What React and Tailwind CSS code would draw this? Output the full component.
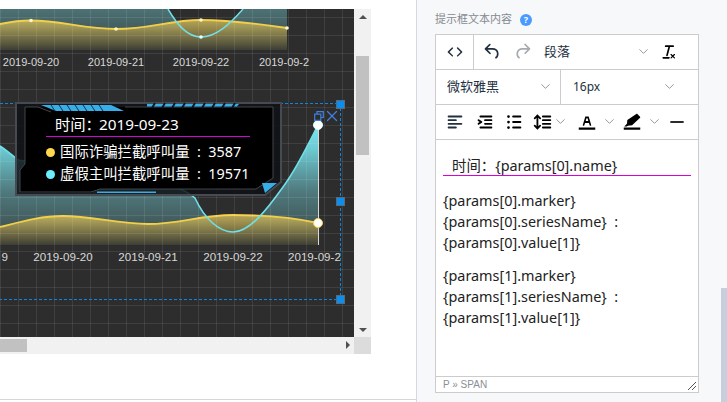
import { ChevronDown, X } from 'lucide-react';

const YAHEI = 'font-["Noto_Sans","Noto_Sans_CJK_SC",sans-serif]';

const GRID_X = Array.from({ length: 20 }, (_, i) => i * 18);
const GRID_Y = Array.from({ length: 19 }, (_, i) => 17.5 + i * 18);

const TOP_DATES = [
  { x: 31, label: '2019-09-20' },
  { x: 116, label: '2019-09-21' },
  { x: 201, label: '2019-09-22' },
  { x: 259, label: '2019-09-2', start: true },
];

const BOTTOM_DATES = [
  { x: 8, label: '9', end: true },
  { x: 63, label: '2019-09-20' },
  { x: 148, label: '2019-09-21' },
  { x: 233, label: '2019-09-22' },
  { x: 288, label: '2019-09-23', start: true },
];

const HANDLES = ['top-[91px]', 'top-[188px]', 'top-[286px]'];

const ICONS = {
  code: 'M9.8 15.7c.3.3.3.8 0 1-.3.4-.9.4-1.2 0l-4.4-4.1a.8.8 0 0 1 0-1.2l4.4-4.2c.3-.3.9-.3 1.2 0 .3.3.3.8 0 1.1L6 12l3.8 3.7zM14.2 15.7c-.3.3-.3.8 0 1 .4.4.9.4 1.2 0l4.4-4.1c.3-.3.3-.9 0-1.2l-4.4-4.2a.8.8 0 0 0-1.2 0c-.3.3-.3.8 0 1.1L18 12l-3.8 3.7z',
  undo: 'M6.4 8H12c3.7 0 6.2 2 6.8 5.1.6 2.7-.4 5.6-2.3 6.8a1 1 0 0 1-1-1.8c1.1-.6 1.8-2.7 1.4-4.6-.5-2.1-2.1-3.5-4.9-3.5H6.4l3.3 3.3a1 1 0 1 1-1.4 1.4l-5-5a1 1 0 0 1 0-1.4l5-5a1 1 0 0 1 1.4 1.4L6.4 8z',
  redo: 'M17.6 10H12c-2.8 0-4.4 1.4-4.9 3.5-.4 2 .3 4 1.4 4.6a1 1 0 1 1-1 1.8c-2-1.2-2.9-4.1-2.3-6.8.6-3 3-5.1 6.8-5.1h5.6l-3.3-3.3a1 1 0 1 1 1.4-1.4l5 5a1 1 0 0 1 0 1.4l-5 5a1 1 0 0 1-1.4-1.4l3.3-3.3z',
  clear: 'M13.2 6a1 1 0 0 1 0 .2l-2.6 10a1 1 0 0 1-1 .8h-.2a.8.8 0 0 1-.8-1l2.6-10H8a1 1 0 1 1 0-2h9a1 1 0 0 1 0 2h-3.8zM5 18h7a1 1 0 0 1 0 2H5a1 1 0 0 1 0-2zm13 1.5L16.5 18 15 19.5a.7.7 0 0 1-1-1l1.5-1.5-1.5-1.5a.7.7 0 0 1 1-1l1.5 1.5 1.5-1.5a.7.7 0 0 1 1 1L17.5 17l1.5 1.5a.7.7 0 0 1-1 1z',
  align: 'M5 5h14c.6 0 1 .4 1 1s-.4 1-1 1H5a1 1 0 1 1 0-2zm0 4h8c.6 0 1 .4 1 1s-.4 1-1 1H5a1 1 0 1 1 0-2zm0 8h8c.6 0 1 .4 1 1s-.4 1-1 1H5a1 1 0 0 1 0-2zm0-4h14c.6 0 1 .4 1 1s-.4 1-1 1H5a1 1 0 0 1 0-2z',
  indent: 'M7 5h12c.6 0 1 .4 1 1s-.4 1-1 1H7a1 1 0 1 1 0-2zm5 4h7c.6 0 1 .4 1 1s-.4 1-1 1h-7a1 1 0 0 1 0-2zm0 4h7c.6 0 1 .4 1 1s-.4 1-1 1h-7a1 1 0 0 1 0-2zm-5 4h12a1 1 0 0 1 0 2H7a1 1 0 0 1 0-2zm-2.6-3.8L6.2 12l-1.8-1.2a1 1 0 0 1 1.2-1.6l3 2a1 1 0 0 1 0 1.6l-3 2a1 1 0 1 1-1.2-1.6z',
  bullets: 'M11 5h8c.6 0 1 .4 1 1s-.4 1-1 1h-8a1 1 0 0 1 0-2zm0 6h8c.6 0 1 .4 1 1s-.4 1-1 1h-8a1 1 0 0 1 0-2zm0 6h8c.6 0 1 .4 1 1s-.4 1-1 1h-8a1 1 0 0 1 0-2zM6 4.5a1.5 1.5 0 1 1 0 3 1.5 1.5 0 0 1 0-3zm0 6a1.5 1.5 0 1 1 0 3 1.5 1.5 0 0 1 0-3zm0 6a1.5 1.5 0 1 1 0 3 1.5 1.5 0 0 1 0-3z',
  lineHeight: 'M21 5a1 1 0 0 1 .1 2H13a1 1 0 0 1-.1-2H21zm0 4a1 1 0 0 1 .1 2H13a1 1 0 0 1-.1-2H21zm0 4a1 1 0 0 1 .1 2H13a1 1 0 0 1-.1-2H21zm0 4a1 1 0 0 1 .1 2H13a1 1 0 0 1-.1-2H21zM7 3.6l3.7 3.7a1 1 0 0 1-1.3 1.5h-.1L8 7.3v9.2l1.3-1.3a1 1 0 0 1 1.3 0h.1c.4.4.4 1 0 1.3v.1L7 20.4l-3.7-3.7a1 1 0 0 1 1.3-1.5h.1L6 16.7V7.4L4.7 8.7a1 1 0 0 1-1.3 0h-.1a1 1 0 0 1 0-1.3v-.1L7 3.6z',
  textColor: 'M3 18h18v2.5H3zM8.7 16h-.8a.5.5 0 0 1-.5-.6l2.7-9c.1-.3.3-.4.5-.4h2.8c.2 0 .4.1.5.4l2.7 9a.5.5 0 0 1-.5.6h-.8a.5.5 0 0 1-.4-.4l-.7-2.2c0-.3-.3-.4-.5-.4h-3.4c-.2 0-.4.1-.5.4l-.7 2.2c0 .3-.2.4-.4.4zm2.6-7.6l-.6 2a.5.5 0 0 0 .5.6h1.6a.5.5 0 0 0 .5-.6l-.6-2c0-.3-.3-.4-.5-.4h-.4c-.2 0-.4.1-.5.4z',
  highlight: 'M3 18h18v2.5H3zM17.8 3.2l3 3c.3.3.3.8 0 1.1l-8.7 8.2-4.6.5-1.3 1H3.5l3-3 .4-4.1 9.8-6.7c.3-.3.8-.3 1.1 0z',
  hr: 'M4 11h16v2H4z',
};

function Icon({ name, size = 20, className = 'text-[#222f3e]' }) {
  return (
    <svg width={size} height={size} viewBox="0 0 24 24" fill="currentColor" className={`shrink-0 ${className}`}>
      <path d={ICONS[name]} />
    </svg>
  );
}

function Caret({ className = '' }) {
  return <ChevronDown size={15} strokeWidth={1.5} className={`shrink-0 text-[#8b9098] ${className}`} />;
}

const TOP_GOLD = 'M0 24 C10 22 20 20.5 31 20.5 C60 20.5 85 29 116 29 C150 29 170 20 201 20 C230 20 260 24 287 28';
const BOTTOM_GOLD = 'M0 227 C20 222 40 216 63 216 C92 216 118 224 148 224 C180 224 200 215 233 215 C265 215 295 218 318 223';
const BOTTOM_CYAN = 'C6 150 12 155 18 160 C70 168 165 172 195 198 C205 220 220 232 233 232 C250 232 268 208 283 187 C296 170 308 145 318 125';

function Chart() {
  return (
    <svg width="354" height="328" viewBox="0 9 354 328" className="block bg-[#2d2d2d]">
      <defs>
        <linearGradient id="tealTop" x1="0" y1="9" x2="0" y2="50" gradientUnits="userSpaceOnUse">
          <stop offset="0" stopColor="#4c7275" />
          <stop offset="1" stopColor="#3a4546" />
        </linearGradient>
        <linearGradient id="tealBottom" x1="0" y1="125" x2="0" y2="245" gradientUnits="userSpaceOnUse">
          <stop offset="0" stopColor="#7fe5ee" />
          <stop offset="0.2" stopColor="#6ccad2" />
          <stop offset="0.55" stopColor="#4f7a7e" />
          <stop offset="1" stopColor="#3a4444" />
        </linearGradient>
        <linearGradient id="goldTop" x1="0" y1="18" x2="0" y2="50" gradientUnits="userSpaceOnUse">
          <stop offset="0" stopColor="#e0c860" stopOpacity="0.8" />
          <stop offset="1" stopColor="#3d3d33" stopOpacity="0.9" />
        </linearGradient>
        <linearGradient id="goldBottom" x1="0" y1="214" x2="0" y2="245" gradientUnits="userSpaceOnUse">
          <stop offset="0" stopColor="#e0c860" stopOpacity="0.8" />
          <stop offset="1" stopColor="#3d3d33" stopOpacity="0.9" />
        </linearGradient>
        <clipPath id="dateClip"><rect x="0" y="240" width="341" height="30" /></clipPath>
      </defs>

      {/* top chart, scrolled out of view */}
      <path d="M0 9 H168 C178 26 188 37 201 37 C216 37 230 24 243 9 H287 V50 H0 Z" fill="url(#tealTop)" />
      <path d={`${TOP_GOLD} V50 H0 Z`} fill="url(#goldTop)" />
      <path d={TOP_GOLD} fill="none" stroke="#f2cf4a" strokeWidth="1.8" />
      <path d="M168 9 C178 26 188 37 201 37 C216 37 230 24 243 9" fill="none" stroke="#6fdfe8" strokeWidth="1.5" />
      {[[31, 20.5], [116, 29], [201, 20], [287, 28]].map(([x, y]) => (
        <circle key={x} cx={x} cy={y} r="1.8" fill="#fff6c8" />
      ))}
      <circle cx="201" cy="37" r="1.8" fill="#e8ffff" />
      <g fontFamily="Liberation Sans, sans-serif" fontSize="11" fill="#d8d8d8">
        {TOP_DATES.map(d => (
          <text key={d.label} x={d.x} y="66" textAnchor={d.start ? 'start' : 'middle'}>{d.label}</text>
        ))}
      </g>

      {/* bottom chart */}
      <path d={`M0 146 ${BOTTOM_CYAN} V245 H0 Z`} fill="url(#tealBottom)" />
      <path d={`${BOTTOM_GOLD} V245 H0 Z`} fill="url(#goldBottom)" />
      <path d={BOTTOM_GOLD} fill="none" stroke="#f2cf4a" strokeWidth="1.8" />
      <path d={`M0 146 ${BOTTOM_CYAN}`} fill="none" stroke="#6fdfe8" strokeWidth="1.6" />

      {/* grid sits over the fills, that is how it looks on the canvas */}
      {GRID_X.map(x => <line key={x} x1={x + 0.5} x2={x + 0.5} y1="9" y2="337" stroke="#fff" strokeOpacity="0.09" />)}
      {GRID_Y.map(y => <line key={y} x1="0" x2="354" y1={y} y2={y} stroke="#fff" strokeOpacity="0.09" />)}

      <line x1="318.5" x2="318.5" y1="125" y2="245" stroke="#d8d8d8" />
      <circle cx="318" cy="125" r="4.5" fill="#fff" stroke="#d9ffff" />
      <circle cx="318" cy="223" r="4.5" fill="#fff" stroke="#f2cf4a" />
      <g fontFamily="Liberation Sans, sans-serif" fontSize="11.6" fill="#d8d8d8" clipPath="url(#dateClip)">
        {BOTTOM_DATES.map(d => (
          <text key={d.label} x={d.x} y="261" textAnchor={d.start ? 'start' : d.end ? 'end' : 'middle'}>{d.label}</text>
        ))}
      </g>

      {/* selection outline */}
      <path d="M0 103.5 H340.5 V299.5 H0" fill="none" stroke="#0a86e0" strokeDasharray="3 2" />
    </svg>
  );
}

function Tooltip() {
  return (
    <div className={`absolute left-[15px] top-[93px] w-[267px] h-[94px] text-white ${YAHEI}`}>
      <svg width="267" height="94" viewBox="0 0 267 94" className="absolute inset-0">
        <path d="M1 1 H266 V80 L250 93 H1 Z" fill="#0c0f12" fillOpacity="0.82" stroke="#454a53" strokeWidth="2" />
        <path d="M10 5 H258 V76 L241 87 H85 L76 91 H5 V68 L10 62 Z" fill="#000" />
        <path d="M23 5 H10 V62 L5 68 V90 H76 L85 87 H241 L258 76 V5 H110" fill="none" stroke="#41454c" />
        <path d="M23 5 L36 10" stroke="#41454c" />
        <path d="M26 3 H96 L109 9 H41 Z" fill="#37aee8" />
        <path d="M36 3 l4 6 M44 3 l4 6 M52 3 l4 6 M60 3 l4 6 M68 3 l4 6 M76 3 l4 6 M84 3 l4 6" stroke="#0a3346" strokeWidth="1" />
        <path d="M132 2 H224 L222 4.5 H132 Z" fill="#37aee8" />
        <path d="M140 1 l-3 5 M150 1 l-3 5 M160 1 l-3 5 M170 1 l-3 5 M180 1 l-3 5 M190 1 l-3 5 M200 1 l-3 5 M210 1 l-3 5 M220 1 l-3 5" stroke="#0c1820" strokeWidth="2" />
        <path d="M82 89.5 H141 V91 H82 Z" fill="#37aee8" />
        <path d="M247 81 H262 L250 91 Z" fill="#37aee8" />
      </svg>
      <div className="relative flex flex-col pl-[31px] pt-[10px]">
        <div className="h-[25px] w-[204px] pl-[9px] text-[15.3px] leading-[24px] border-b border-[#d900d9] whitespace-nowrap">
          时间：<span className="-ml-[2px]">2019-09-23</span>
        </div>
        <div className="mt-[4px]">
          <Row color="bg-[#ffd84d]" name="国际诈骗拦截呼叫量" value="3587" />
          <Row color="bg-[#6ceeff]" name="虚假主叫拦截呼叫量" value="19571" />
        </div>
      </div>
    </div>
  );
}

function Row({ color, name, value }) {
  return (
    <div className="flex items-center h-[22px] text-[14.4px] whitespace-nowrap">
      <span className={`w-[9px] h-[9px] rounded-full mr-[5px] ${color}`} />
      <span>{name}{'\u00a0\u00a0:\u00a0\u00a0'}{value}</span>
    </div>
  );
}

function EditorToolbar() {
  return (
    <>
      <div className="flex h-[35px] items-center border-b border-[#ccc]">
        <div className="w-[38px] h-full flex items-center justify-center border-r border-[#ccc]">
          <Icon name="code" size={22} />
        </div>
        <Icon name="undo" size={21} className="ml-[8px] text-[#222f3e]" />
        <Icon name="redo" size={21} className="ml-[9px] text-[#a6abb1]" />
        <span className="ml-[11px] text-[13px] text-[#222f3e] w-[92px]">段落</span>
        <Caret />
        <Icon name="clear" size={20} className="ml-[8px]" />
      </div>
      <div className="flex h-[35px] items-center border-b border-[#ccc] text-[13px] text-[#222f3e]">
        <div className="w-[125px] h-full flex items-center justify-between pl-[11px] pr-[7px] border-r border-[#ccc]">
          <span>微软雅黑</span>
          <Caret />
        </div>
        <div className="flex-1 h-full flex items-center justify-between pl-[12px] pr-[21px]">
          <span className="text-[12px]">16px</span>
          <Caret />
        </div>
      </div>
      <div className="flex h-[35px] items-center border-b border-[#ccc] pl-[8px]">
        <Icon name="align" size={22} />
        <Icon name="indent" size={22} className="ml-[8px]" />
        <Icon name="bullets" size={22} className="ml-[7px]" />
        <Icon name="lineHeight" size={22} className="ml-[6px]" />
        <Caret />
        <Icon name="textColor" size={22} className="ml-[8px]" />
        <Caret className="ml-[4px]" />
        <Icon name="highlight" size={22} className="ml-[4px]" />
        <Caret className="ml-[4px]" />
        <Icon name="hr" size={20} className="ml-[5px]" />
      </div>
    </>
  );
}

function EditorBody() {
  return (
    <div className={`h-[237px] px-[7px] pt-[16px] text-[14.4px] leading-[21px] text-[#222] ${YAHEI}`}>
      <div className="h-[20px] leading-[20px] pl-[9px] border-b border-[#d900d9]">时间：{'{params[0].name}'}</div>
      <p className="mt-[14px]">{'{params[0].marker}'}<br />{'{params[0].seriesName}'}{'\u00a0\u00a0:'}<br />{'{params[0].value[1]}'}</p>
      <p className="mt-[12px]">{'{params[1].marker}'}<br />{'{params[1].seriesName}'}{'\u00a0\u00a0:'}<br />{'{params[1].value[1]}'}</p>
    </div>
  );
}

export default function App() {
  return (
    <div className="w-[727px] h-[402px] flex overflow-hidden bg-white font-['Liberation_Sans',sans-serif]">
      {/* canvas side */}
      <div className="w-[416px] h-full pt-[9px] relative">
        <div className="grid grid-cols-[354px_17px] grid-rows-[328px_17px] w-[371px]">
          <div className="relative overflow-hidden">
            <Chart />
            <Tooltip />
            {HANDLES.map(t => (
              <span key={t} className={`absolute left-[336px] w-[9px] h-[9px] bg-[#0a8ff0] border border-[#5a6a78] ${t}`} />
            ))}
            <svg width="10" height="10" viewBox="0 0 10 10" fill="none" stroke="#3f7fe0" strokeWidth="1.2" className="absolute left-[314px] top-[102px]">
              <path d="M3 3 V0.7 H9.3 V6.5 H7 M0.7 3.2 H6.8 V9.3 H0.7 Z" />
            </svg>
            <X size={18} strokeWidth={1.7} className="absolute left-[322.5px] top-[98px] text-[#3f7fe0]" />
          </div>
          <div className="relative bg-[#f1f1f1]">
            <span className="absolute left-[2px] top-[47px] w-[13px] h-[99px] bg-[#c1c1c1]" />
            <span className="absolute left-[5px] top-[6px] border-x-[4px] border-x-transparent border-b-[4px] border-b-[#505050]" />
            <span className="absolute left-[5px] bottom-[5px] border-x-[4px] border-x-transparent border-t-[4px] border-t-[#505050]" />
          </div>
          <div className="relative bg-[#f1f1f1]">
            <span className="absolute left-0 top-[2px] w-[27px] h-[13px] bg-[#c1c1c1]" />
            <span className="absolute right-[4px] top-[4px] border-y-[4px] border-y-transparent border-l-[4px] border-l-[#505050]" />
          </div>
          <div className="bg-[#dcdcdc]" />
        </div>
        <div className="absolute left-0 right-0 top-[399px] h-px bg-[#d6d6d6]" />
      </div>

      {/* settings side */}
      <div className={`relative flex-1 h-full bg-[#f7f8fa] border-l border-[#d5d9e2] pl-[18px] ${YAHEI}`}>
        <div className="h-[34px] flex items-center gap-[8px] pt-[5px] text-[11px] text-[#858a91]">
          <span>提示框文本内容</span>
          <span className="w-[12px] h-[12px] rounded-full bg-[#4b9bff] text-white text-[9px] leading-[12px] font-bold text-center">?</span>
        </div>
        <div className="w-[264px] h-[359px] bg-white border border-[#ccc] flex flex-col">
          <EditorToolbar />
          <EditorBody />
          <div className="relative flex-1 border-t border-[#ccc] pl-[7px] text-[10px] leading-[15px] text-[#8a8f96] font-['Liberation_Sans',sans-serif]">
            P » SPAN
            <svg width="10" height="10" viewBox="0 0 10 10" stroke="#555" className="absolute right-[1px] bottom-[1px]">
              <path d="M1 9 L9 1 M5 9 L9 5" />
            </svg>
          </div>
        </div>
        <span className="absolute right-0 top-[288px] w-[6px] h-[114px] bg-[#c8cedb]" />
      </div>
    </div>
  );
}
